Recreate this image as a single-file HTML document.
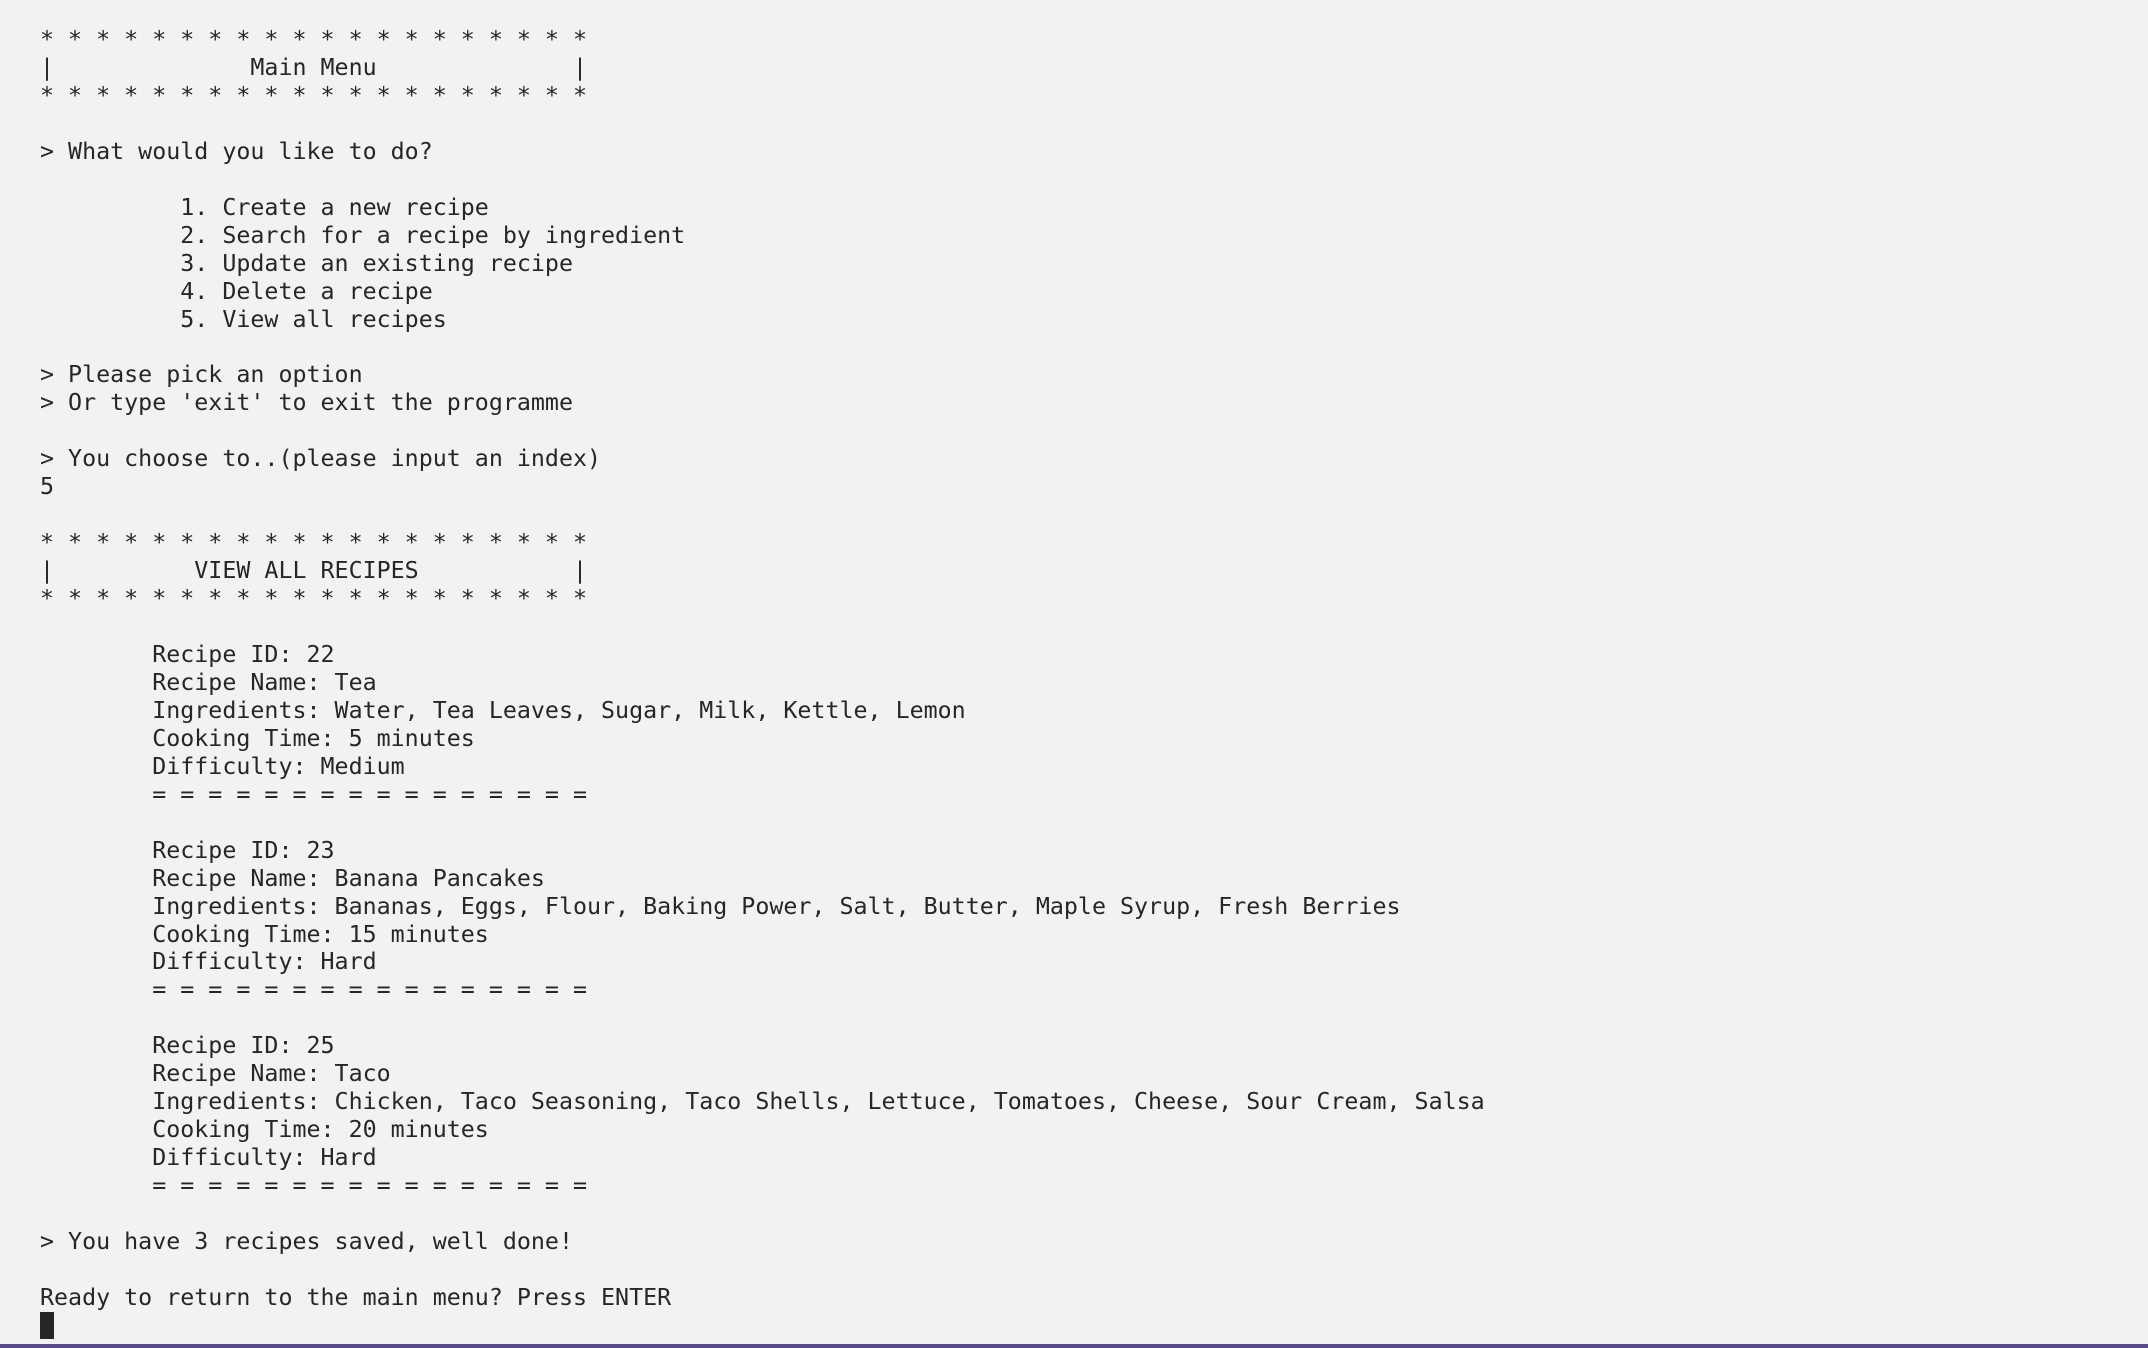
<!DOCTYPE html>
<html><head><meta charset="utf-8"><style>
html,body{margin:0;padding:0;background:#f2f2f2;width:2148px;height:1348px;overflow:hidden;position:relative}
pre{position:absolute;left:40px;top:26px;margin:0;font-family:"DejaVu Sans Mono","Liberation Mono",monospace;font-size:23.3px;line-height:27.95px;color:#262626;white-space:pre}
.cur{position:absolute;left:40px;top:1312px;width:14px;height:27px;background:#262626}
.bar{position:absolute;left:0;bottom:0;width:2148px;height:4px;background:#5b4a8b}
</style></head><body>
<pre>* * * * * * * * * * * * * * * * * * * *
|              Main Menu              |
* * * * * * * * * * * * * * * * * * * *

&gt; What would you like to do?

          1. Create a new recipe
          2. Search for a recipe by ingredient
          3. Update an existing recipe
          4. Delete a recipe
          5. View all recipes

&gt; Please pick an option
&gt; Or type 'exit' to exit the programme

&gt; You choose to..(please input an index)
5

* * * * * * * * * * * * * * * * * * * *
|          VIEW ALL RECIPES           |
* * * * * * * * * * * * * * * * * * * *

        Recipe ID: 22
        Recipe Name: Tea
        Ingredients: Water, Tea Leaves, Sugar, Milk, Kettle, Lemon
        Cooking Time: 5 minutes
        Difficulty: Medium
        = = = = = = = = = = = = = = = =

        Recipe ID: 23
        Recipe Name: Banana Pancakes
        Ingredients: Bananas, Eggs, Flour, Baking Power, Salt, Butter, Maple Syrup, Fresh Berries
        Cooking Time: 15 minutes
        Difficulty: Hard
        = = = = = = = = = = = = = = = =

        Recipe ID: 25
        Recipe Name: Taco
        Ingredients: Chicken, Taco Seasoning, Taco Shells, Lettuce, Tomatoes, Cheese, Sour Cream, Salsa
        Cooking Time: 20 minutes
        Difficulty: Hard
        = = = = = = = = = = = = = = = =

&gt; You have 3 recipes saved, well done!

Ready to return to the main menu? Press ENTER</pre>
<div class="cur"></div>
<div class="bar"></div>
</body></html>
